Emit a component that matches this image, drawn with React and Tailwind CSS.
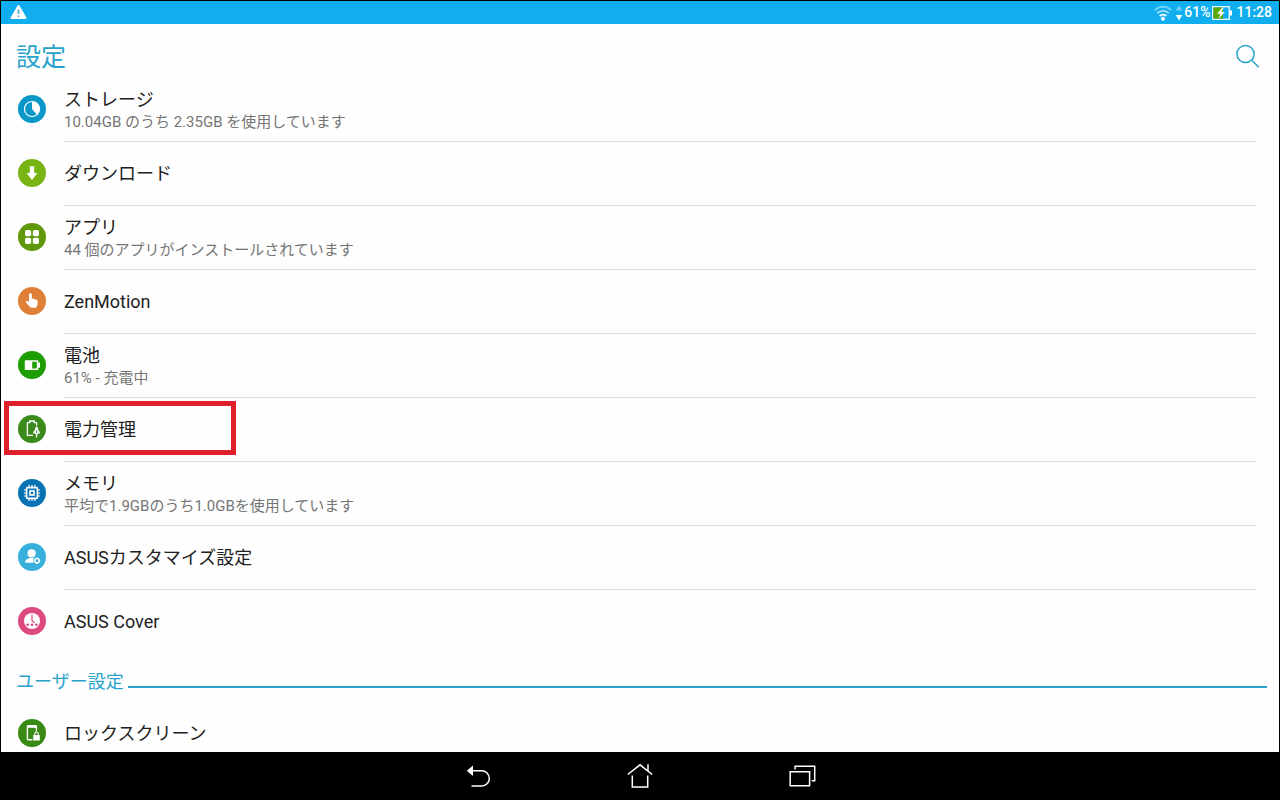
const ICONS = {
  storage: (
    <>
      <circle cx="14" cy="14" r="7.5" fill="none" stroke="#fff" strokeWidth="1.2" />
      <path d="M14 6.5a7.5 7.5 0 0 1 5 13.200L14 14z" fill="#fff" />
    </>
  ),
  download: <path d="M11.8 7.2h4.4v6.8h3.2L14 21 8.600 14h3.200z" fill="#fff" />,
  apps: (
    <g fill="#fff">
      <rect x="7" y="7" width="6.2" height="6.2" rx="1.8" />
      <rect x="14.8" y="7" width="6.2" height="6.2" rx="1.8" />
      <rect x="7" y="14.8" width="6.2" height="6.2" rx="1.8" />
      <rect x="14.8" y="14.8" width="6.2" height="6.2" rx="1.8" />
    </g>
  ),
  motion: (
    <path
      d="M11 7.6a1.400 1.400 0 0 1 2.800 0v4.200c.8-.4 1.600-.2 2 .4.8-.3 1.500 0 1.800.6 1-.2 2.100.3 2.100 1.500 0 2.700-.3 4.300-1.700 6.500h-5.200c-1.500-1.500-3.400-3.500-4.800-5.200-.7-1 .5-2.200 1.600-1.500l1.400 1z"
      fill="#fff"
    />
  ),
  battery: (
    <>
      <path d="M6.8 9.2h13.400v2.200H22v5.400h-1.800V19H6.800z" fill="#fff" />
      <path d="M14.200 10.800h4.600v6.600h-4.600z" fill="#1f9d05" />
    </>
  ),
  power: (
    <>
      <path
        d="M15 20.400H9.400V7.600h2.400V6h4.400v1.600h2.400v2.800"
        fill="none"
        stroke="#fff"
        strokeWidth="1.3"
      />
      <path
        d="M18.600 11.200c1.200 1.100 1.700 2.400 1.700 3.800 1.100.8 1.700 2 1.700 3.500h-1.800l-.9 1v3h-1.400v-3l-.9-1h-1.800c0-1.500.6-2.700 1.700-3.500 0-1.400.5-2.700 1.700-3.800z"
        fill="#fff"
      />
      <path d="M18.600 15.400v2.600" stroke="#3a8a1c" strokeWidth="1" />
    </>
  ),
  memory: (
    <g fill="none" stroke="#fff">
      <rect x="8.600" y="8.600" width="10.800" height="10.800" rx="1" strokeWidth="1.6" />
      <rect x="12" y="12" width="4" height="4" strokeWidth="1.6" />
      <path
        d="M11 6v2M14 6v2M17 6v2M11 20v2M14 20v2M17 20v2M6 11h2M6 14h2M6 17h2M20 11h2M20 14h2M20 17h2"
        strokeWidth="1.2"
      />
    </g>
  ),
  customize: (
    <>
      <circle cx="13.600" cy="10.400" r="4.100" fill="#fff" />
      <path d="M7 19.800c.2-3 2.200-3.900 5-4.700h3.400l1.600.7-1.300 4z" fill="#fff" />
      <circle cx="19" cy="17.800" r="3.800" fill="#37b0dc" />
      <circle cx="19" cy="17.800" r="2.200" fill="none" stroke="#fff" strokeWidth="1.5" />
      <path
        d="M19 14.500v1M19 20v1M15.700 17.800h1M21.200 17.800h1"
        stroke="#fff"
        strokeWidth="1.2"
      />
    </>
  ),
  cover: (
    <>
      <circle cx="14" cy="14" r="8" fill="#fff" />
      <path d="M14 7.800v6l2.600 2.200" fill="none" stroke="#dd4a80" strokeWidth="1.2" />
      <g fill="#dd4a80">
        <circle cx="9.600" cy="17.800" r="1.300" />
        <circle cx="14" cy="17.800" r="1.300" />
        <circle cx="18.400" cy="17.800" r="1.300" />
      </g>
    </>
  ),
  lock: (
    <>
      <path
        d="M14.400 20.800H10.400a1 1 0 0 1-1-1V7.600a1 1 0 0 1 1-1h7a1 1 0 0 1 1 1v4.800"
        fill="none"
        stroke="#fff"
        strokeWidth="1.4"
      />
      <path d="M9.400 6.200h9v2.600h-9z" fill="#fff" />
      <path d="M15.200 16h6.600v5.600h-6.600z" fill="#fff" />
      <path d="M16.700 16v-1a1.800 1.800 0 0 1 3.600 0v1" fill="none" stroke="#fff" strokeWidth="1.1" />
    </>
  ),
};

const DEVICE_ITEMS = [
  { icon: "storage", color: "#0c97c9", title: "ストレージ", desc: "10.04GB のうち 2.35GB を使用しています" },
  { icon: "download", color: "#78b414", title: "ダウンロード" },
  { icon: "apps", color: "#5f980a", title: "アプリ", desc: "44 個のアプリがインストールされています" },
  { icon: "motion", color: "#e08038", title: "ZenMotion" },
  { icon: "battery", color: "#1f9d05", title: "電池", desc: "61% - 充電中" },
  { icon: "power", color: "#3a8a1c", title: "電力管理", marked: true },
  { icon: "memory", color: "#0873b2", title: "メモリ", desc: "平均で1.9GBのうち1.0GBを使用しています" },
  { icon: "customize", color: "#37b0dc", title: "ASUSカスタマイズ設定" },
  { icon: "cover", color: "#dd4a80", title: "ASUS Cover" },
];

const USER_ITEMS = [{ icon: "lock", color: "#398a14", title: "ロックスクリーン" }];

function StatusBar() {
  return (
    <div className="flex h-[23px] shrink-0 items-center justify-between bg-[#10aeee] pl-2 pr-[7px] text-[14px] font-medium text-white">
      <svg className="h-[18px] w-[18px]" viewBox="0 0 18 18" aria-label="警告">
        <path d="M9.500 2L16.500 14H2.500z" fill="#fff" stroke="#fff" strokeWidth="2" strokeLinejoin="round" />
        <path d="M9.500 5.500V10M9.500 11.500V13" stroke="#4a9fc4" strokeWidth="1.6" />
      </svg>
      <div className="flex items-center">
        <svg className="h-4 w-[18px]" viewBox="0 0 18 16" fill="none" strokeWidth="1.8" aria-label="Wi-Fi">
          <path d="M0.800 5.200a11.500 11.500 0 0 1 16.400 0" stroke="#75d0f6" />
          <path d="M3.200 8.200a8.200 8.200 0 0 1 11.600 0" stroke="#a9e2fa" />
          <path d="M5.600 11a4.800 4.800 0 0 1 6.800 0" stroke="#fff" />
          <circle cx="9" cy="13.800" r="2" fill="#fff" />
        </svg>
        <svg className="ml-[3px] h-4 w-2" viewBox="0 0 8 16" aria-hidden="true">
          <path d="M4 0.500l3.200 5H.8z" fill="#75d0f6" />
          <path d="M4 15.500L.8 10h6.400z" fill="#fff" />
        </svg>
        <span className="ml-px">61%</span>
        <svg className="ml-[2px] h-4 w-5" viewBox="0 0 20 16" aria-label="充電中">
          <rect x="0.700" y="1.700" width="16.600" height="12.600" fill="#10aeee" stroke="#e4f6fd" strokeWidth="1.4" />
          <path d="M1.400 2.400h9.600v11.200H1.400z" fill="#5aa800" />
          <path d="M18 5.500h2v5h-2z" fill="#fff" />
          <path d="M10.500 2.600L5 8.800h3.400l-1.600 4.600 6-6.400H9.400l2.400-4.400z" fill="#fff" />
        </svg>
        <time className="ml-1">11:28</time>
      </div>
    </div>
  );
}

function SettingRow({ item, last }) {
  return (
    <li className="relative">
      <a href="#" className="flex h-16 pl-[17px] pr-[23px]">
        <svg className="mr-[18px] mt-[17px] h-7 w-7 shrink-0" viewBox="0 0 28 28" aria-hidden="true">
          <circle cx="14" cy="14" r="14" fill={item.color} />
          {ICONS[item.icon]}
        </svg>
        <div
          className={`flex flex-1 flex-col justify-center border-b ${
            last ? "border-transparent" : "border-[#dcdcdc]"
          }`}
        >
          <span className="text-[18px] leading-6 text-[#212121]">{item.title}</span>
          {item.desc && <span className="text-[15px] leading-5 text-[#757575]">{item.desc}</span>}
        </div>
      </a>
      {item.marked && (
        <div className="pointer-events-none absolute left-[3px] top-[3px] h-[54px] w-[232px] border-5 border-[#e0202a]" />
      )}
    </li>
  );
}

function NavBar() {
  return (
    <nav className="flex h-12 shrink-0 items-center justify-center gap-[130px] bg-black text-white">
      <button type="button" aria-label="戻る">
        <svg className="h-8 w-8" viewBox="0 0 32 32" fill="none" stroke="currentColor" strokeWidth="1.5">
          <path d="M9 10.700h10.600a7.700 7.700 0 0 1 0 15.400H9.500" />
          <path d="M4.800 10.700l6.200-5.200v10.400z" fill="currentColor" stroke="none" />
        </svg>
      </button>
      <button type="button" aria-label="ホーム">
        <svg className="h-8 w-8" viewBox="0 0 32 32" fill="none" stroke="currentColor" strokeWidth="1.5">
          <path d="M3.800 14.500L16 4.800l12.200 9.700M8.300 15.500v11.400h15.400V15.500M24 4.200v7" />
        </svg>
      </button>
      <button type="button" aria-label="最近使ったアプリ">
        <svg className="h-8 w-8" viewBox="0 0 32 32" fill="none" stroke="currentColor" strokeWidth="1.5">
          <path d="M4.200 11.700h19.400v14H4.200zM9.100 9.500V6.200h19.600v14.600h-3" />
        </svg>
      </button>
    </nav>
  );
}

export default function App() {
  return (
    <div className="flex h-screen flex-col overflow-hidden border border-b-0 border-black bg-[#fefefe] font-['Roboto','Noto_Sans_CJK_JP',sans-serif]">
      <StatusBar />

      {/* Title bar */}
      <header className="flex h-[54px] shrink-0 items-end justify-between pl-[15px] pr-4 text-[#28a3cb]">
        <h1 className="text-[25px] leading-10">設定</h1>
        <button type="button" aria-label="検索" className="mb-1.5">
          <svg className="h-8 w-8" viewBox="0 0 32 32" fill="none" stroke="currentColor" strokeWidth="1.5">
            <circle cx="14.500" cy="14" r="8.600" />
            <path d="M20.800 20.200l7 7" />
          </svg>
        </button>
      </header>

      <main className="min-h-0 flex-1 overflow-hidden">
        <ul>
          {DEVICE_ITEMS.map((item, i) => (
            <SettingRow key={item.icon} item={item} last={i === DEVICE_ITEMS.length - 1} />
          ))}
        </ul>

        {/* User settings */}
        <div className="flex h-12 items-center gap-1 pl-[15px] pr-3 pt-2">
          <h2 className="text-[18px] leading-6 text-[#28a3cb]">ユーザー設定</h2>
          <div className="mt-2.5 h-0.5 flex-1 bg-[#2ba3c8]" />
        </div>
        <ul>
          {USER_ITEMS.map((item) => (
            <SettingRow key={item.icon} item={item} last />
          ))}
        </ul>
      </main>

      <NavBar />
    </div>
  );
}
